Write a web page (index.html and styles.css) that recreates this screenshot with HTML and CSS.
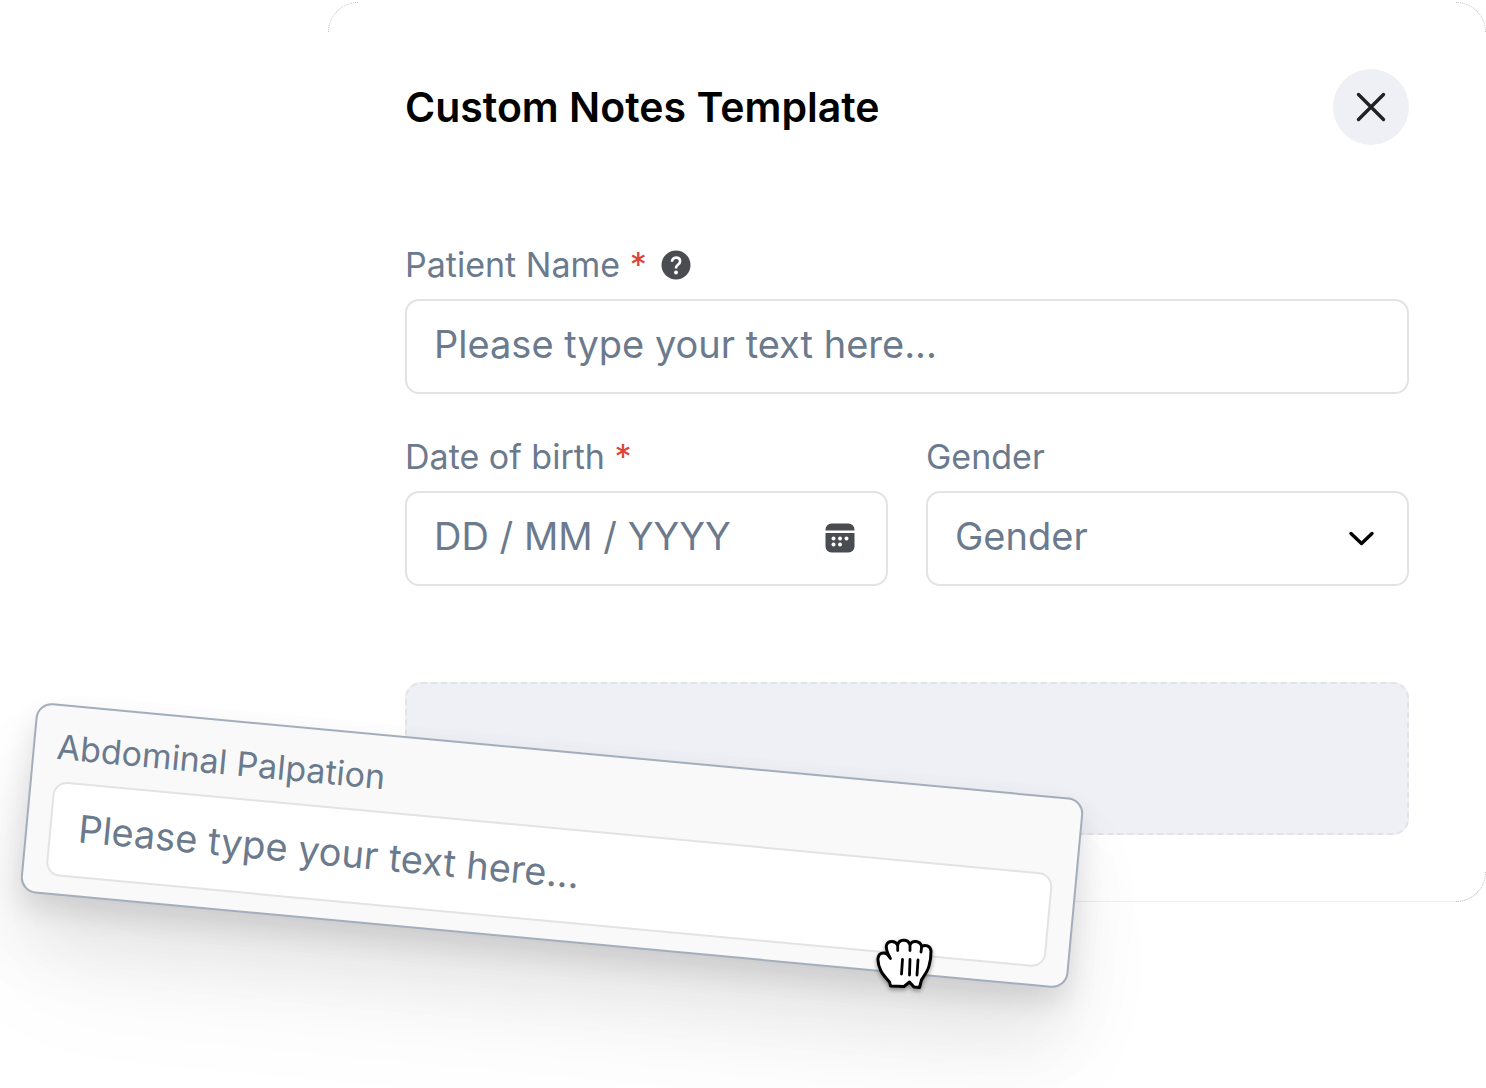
FILE: index.html
```
<!DOCTYPE html>
<html lang="en">
<head>
    <meta charset="UTF-8">
    <meta name="viewport" content="width=device-width, initial-scale=1.0">
    <title>Custom Notes Template</title>
    <link rel="stylesheet" href="styles.css">
</head>
<body>
    <main class="page">
        <form class="template">
            <span class="corner corner-tl"></span>
            <span class="corner corner-tr"></span>
            <span class="corner corner-br"></span>

            <header class="header">
                <h1>Custom Notes Template</h1>
                <button class="close-btn" type="button" aria-label="Close">
                    <svg width="30" height="30" viewBox="0 0 30 30" fill="none" stroke="#1f2123" stroke-width="3.4" stroke-linecap="round">
                        <path d="M2.5 2.5L27.5 27.5M27.5 2.5L2.5 27.5"/>
                    </svg>
                </button>
            </header>

            <div class="field">
                <div class="label-row">
                    <label for="name">Patient Name <span class="required">*</span></label>
                    <svg class="help" width="30" height="30" viewBox="0 0 30 30" fill="none">
                        <circle cx="15" cy="15" r="14.5" fill="#494d52"/>
                        <path d="M11 11.8C11 9.2 12.7 7.6 15 7.6C17.4 7.6 19.1 9.1 19.1 11.3C19.1 13 18.1 13.9 16.9 14.8C15.7 15.7 15 16.4 15 18V18.6" stroke="#fff" stroke-width="2.6"/>
                        <circle cx="15" cy="22.4" r="2" fill="#fff"/>
                    </svg>
                </div>
                <input class="control" id="name" type="text" placeholder="Please type your text here...">
            </div>

            <div class="row">
                <div class="field">
                    <div class="label-row">
                        <label for="dob">Date of birth <span class="required">*</span></label>
                    </div>
                    <div class="control-wrap">
                        <input class="control" id="dob" type="text" placeholder="DD / MM / YYYY">
                        <svg class="control-icon" width="30" height="30" viewBox="0 0 30 30">
                            <path d="M0.5 7.5V6.5A6 6 0 0 1 6.5 0.5H23.5A6 6 0 0 1 29.5 6.5V7.5Z" fill="#494d52"/>
                            <path d="M0.5 10H29.5V23.5A6 6 0 0 1 23.5 29.5H6.5A6 6 0 0 1 0.5 23.5Z" fill="#494d52"/>
                            <g fill="#fff">
                                <circle cx="8.5" cy="15.5" r="2"/>
                                <circle cx="15" cy="15.5" r="2"/>
                                <circle cx="21.5" cy="15.5" r="2"/>
                                <circle cx="8.5" cy="21.5" r="2"/>
                                <circle cx="15" cy="21.5" r="2"/>
                            </g>
                        </svg>
                    </div>
                </div>
                <div class="field">
                    <div class="label-row">
                        <label for="gender">Gender</label>
                    </div>
                    <div class="control-wrap">
                        <select class="control" id="gender">
                            <option>Gender</option>
                        </select>
                        <svg class="control-icon" width="30" height="30" viewBox="0 0 30 30" fill="none" stroke="#000" stroke-width="3.4" stroke-linecap="round" stroke-linejoin="round">
                            <path d="M5 10.5L15.5 20.5L26 10.5"/>
                        </svg>
                    </div>
                </div>
            </div>

            <div class="dropzone"></div>
        </form>

        <!-- block being dragged into the template -->
        <div class="dragged">
            <div class="label-row">
                <label for="palpation">Abdominal Palpation</label>
            </div>
            <input class="control" id="palpation" type="text" placeholder="Please type your text here...">
        </div>

        <svg class="grab" width="60" height="60" viewBox="0 0 60 60">
            <path d="M15.5 50L14.5 46C11 42 8 39 6 35C3.5 30 2.7 26 3 22.5C3.5 18.5 6 17 8.5 17C11 17 13 18.5 14.5 21C11.5 15 10.5 10.5 12 8C14 4.5 20 4.5 22.7 9C24 3 32.5 2.5 35 8.5C37.5 4 45 4.5 46.7 10.5C50 8.5 55.5 9.5 56 15C56 20 55.5 25 54 30C52.5 36 48.5 40 46.5 44L44.5 51.5L39 51L34.5 46L29 50.5Z" fill="#fff" stroke="#000" stroke-width="3" stroke-linejoin="round"/>
            <path d="M22.7 9V14.5M35 8.5V14.5M46.7 10.5L46 16M14.3 20.5L15.5 22.5M27.5 23.5L26.5 38M35 23.5L34.5 39M43 24L42 39" fill="none" stroke="#000" stroke-width="2.8" stroke-linecap="round"/>
        </svg>
    </main>
</body>
</html>
```
FILE: styles.css
```
* {
    margin: 0;
    padding: 0;
    box-sizing: border-box;
    font-family: Inter, "Liberation Sans", sans-serif;
}

:root {
    --slate: #6b7a8d;
    --line: #e2e3e6;
    --fill: #eff0f5;
}

body {
    background-color: white;
}

.page {
    position: relative;
    min-height: 100vh;
    padding: 2px 0 0 328px;
    overflow: hidden;
}

.template {
    position: relative;
    padding: 67px 77px 66px;
    border-bottom: 1px solid #efefef;
    border-radius: 0 0 30px 0;
}

.corner {
    position: absolute;
    width: 30px;
    height: 30px;
    border: 0 dotted #bcbec2;
}

.corner-tl {
    top: 0;
    left: 0;
    border-width: 1px 0 0 1px;
    border-radius: 30px 0 0 0;
}

.corner-tr {
    top: 0;
    right: 0;
    border-width: 1px 1px 0 0;
    border-radius: 0 30px 0 0;
}

.corner-br {
    bottom: -1px;
    right: 0;
    border-width: 0 1px 1px 0;
    border-radius: 0 0 30px 0;
}

.header {
    display: flex;
    justify-content: space-between;
    align-items: center;
    margin-bottom: 100px;
}

.header h1 {
    font-size: 41px;
    font-weight: 600;
    line-height: 48px;
    color: black;
}

.close-btn {
    display: flex;
    align-items: center;
    justify-content: center;
    width: 76px;
    height: 76px;
    border: none;
    border-radius: 50%;
    background-color: var(--fill);
    cursor: pointer;
}

.row {
    display: flex;
    gap: 38px;
    margin: 43px 0 96px;
}

.row .field {
    flex: 1;
}

.label-row {
    display: flex;
    align-items: center;
    gap: 14px;
    margin-bottom: 14px;
    font-size: 34px;
    line-height: 40px;
    color: var(--slate);
}

.required {
    color: #dc4437;
}

.control-wrap {
    position: relative;
}

.control {
    display: block;
    width: 100%;
    height: 95px;
    padding: 0 27px 6px;
    border: 2px solid var(--line);
    border-radius: 14px;
    background-color: white;
    font-size: 38px;
    color: var(--slate);
    appearance: none;
    outline: none;
}

.control::placeholder {
    color: var(--slate);
    opacity: 1;
}

.control-icon {
    position: absolute;
    top: 32px;
    right: 33px;
    pointer-events: none;
}

.dropzone {
    height: 153px;
    border: 2px dashed var(--line);
    border-radius: 16px;
    background-color: var(--fill);
}

.dragged {
    position: absolute;
    top: 750px;
    left: 26px;
    width: 1052px;
    padding: 21px 22px 17px;
    border: 2px solid #a3aebc;
    border-radius: 16px;
    background-color: #f9f9f9;
    box-shadow: 0 14px 28px rgba(0, 0, 0, 0.11),
        0 48px 72px rgba(0, 0, 0, 0.08),
        0 84px 120px rgba(0, 0, 0, 0.04);
    transform: rotate(5.3deg);
    cursor: grabbing;
}

.grab {
    position: absolute;
    top: 936px;
    left: 875px;
    filter: drop-shadow(0 2px 2px rgba(0, 0, 0, 0.4));
    pointer-events: none;
}
```
